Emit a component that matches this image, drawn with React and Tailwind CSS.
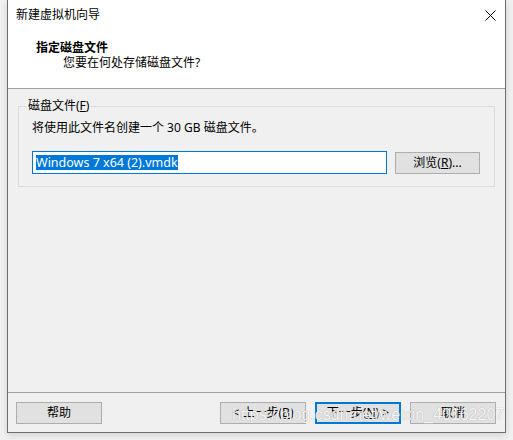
import React from "react";

const font = "font-['Noto_Sans','Noto_Sans_CJK_SC',sans-serif]";

function WinButton({ children, primary = false }) {
  return (
    <button
      className={`h-[22px] w-[86px] bg-[#e1e1e1] text-[12px] leading-none text-black flex items-center justify-center ${
        primary ? "border-2 border-[#0078d7]" : "border border-[#adadad]"
      }`}
    >
      {children}
    </button>
  );
}

export default function App() {
  return (
    <div className={`relative w-[513px] h-[440px] bg-[#f2f2f2] ${font} overflow-hidden`}>
      {/* window */}
      <div className="ml-[7px] w-[499px] h-[433px] flex flex-col border-x border-b border-[#6e6e6e] bg-[#f0f0f0] shadow-[0_2px_8px_rgba(0,0,0,0.15)]">
        {/* title bar + header */}
        <div className="bg-white border-b border-[#a0a0a0] h-[89px] flex flex-col">
          <div className="h-[30px] flex items-center justify-between pl-[8px] pr-[10px]">
            <span className="text-[12px] text-black leading-none">新建虚拟机向导</span>
            <svg width="11" height="11" viewBox="0 0 11 11" className="mr-[-1px]">
              <path d="M0.5 0.5 L10.5 10.5 M10.5 0.5 L0.5 10.5" stroke="#000" strokeWidth="1" fill="none" />
            </svg>
          </div>
          <div className="pl-[28px] pt-[10px]">
            <div className="text-[12px] font-bold leading-[15px] text-black">指定磁盘文件</div>
            <div className="pl-[27px] text-[12px] leading-[15px] text-black">您要在何处存储磁盘文件?</div>
          </div>
        </div>

        {/* content */}
        <div className="flex-1 flex flex-col">
          <fieldset className="mt-[9px] ml-[10px] w-[477px] border border-[#dcdcdc] pl-[13px] pb-[12px] pr-[8px]">
            <legend className="ml-[-6px] px-[2px] text-[12px] leading-[16px] text-black">
              磁盘文件(<span className="underline">F</span>)
            </legend>
            <div className="mt-[6px] text-[12px] leading-[16px] text-black">
              将使用此文件名创建一个 30 GB 磁盘文件。
            </div>
            <div className="mt-[15px] flex items-center">
              <div className="w-[355px] h-[23px] border border-[#0078d7] bg-white flex items-center pl-[3px]">
                <span className="bg-[#0078d7] text-white text-[12.5px] leading-[15px]">Windows 7 x64 (2).vmdk</span>
              </div>
              <div className="ml-[8px]">
                <button className="h-[22px] w-[85px] bg-[#e1e1e1] border border-[#adadad] text-[12px] leading-none text-black flex items-center justify-center">
                  浏览(<span className="underline">R</span>)...
                </button>
              </div>
            </div>
          </fieldset>

          <div className="flex-1" />

          {/* footer */}
          <div className="border-t border-[#a0a0a0] pt-[9px] pb-[8px] pl-[8px] pr-[9px] flex items-center">
            <WinButton>帮助</WinButton>
            <div className="flex-1" />
            <div className="flex gap-[9px]">
              <WinButton>&lt; 上一步(<span className="underline">B</span>)</WinButton>
              <WinButton primary>下一步(<span className="underline">N</span>) &gt;</WinButton>
              <WinButton>取消</WinButton>
            </div>
          </div>
        </div>
      </div>

      {/* watermark */}
      <div className="absolute left-[232px] top-[405px] text-[16px] leading-[20px] text-white/90 font-['Liberation_Sans',sans-serif] [text-shadow:0_0_1px_rgba(0,0,0,0.35)] pointer-events-none whitespace-nowrap">
        https://blog.csdn.net/weixin_40162207
      </div>
    </div>
  );
}
